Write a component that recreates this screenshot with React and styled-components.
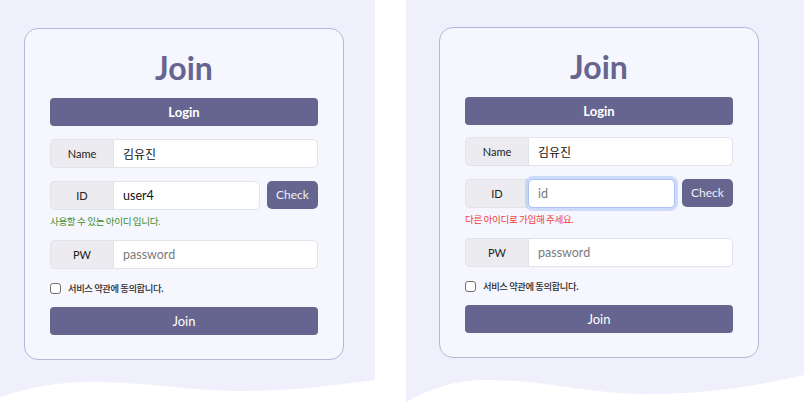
import React from "react";
import styled, { createGlobalStyle, css } from "styled-components";

const Global = createGlobalStyle`
  html, body { margin: 0; padding: 0; background: #ffffff; }
  body { font-family: Lato, "Noto Sans CJK KR", sans-serif; }
  * { box-sizing: border-box; }
`;

const Page = styled.div`
  display: flex;
  width: 804px;
  height: 406px;
  gap: 31px;
  background: #ffffff;
  overflow: hidden;
`;

const Panel = styled.section`
  display: flex;
  flex-direction: column;
  width: ${(p) => p.$width}px;
  height: 406px;
  background: #f0effc;
`;

const Card = styled.div`
  width: 320px;
  margin-top: ${(p) => p.$top}px;
  margin-left: ${(p) => p.$left}px;
  padding: 19px 25px 24px;
  border: 1px solid #b8b6d6;
  border-radius: 14px;
  background: #f6f6fe;
  display: flex;
  flex-direction: column;
`;

const Title = styled.h1`
  margin: 0;
  font-family: Lato, sans-serif;
  font-size: 32px;
  line-height: 40px;
  font-weight: 700;
  color: #65658f;
  text-align: center;
`;

const PrimaryButton = styled.button`
  display: block;
  width: 100%;
  height: 28px;
  margin: ${(p) => p.$margin};
  border: none;
  border-radius: 4px;
  background: #65658f;
  color: #ffffff;
  font-family: Lato, sans-serif;
  font-size: 13px;
  font-weight: ${(p) => (p.$bold ? 700 : 400)};
  padding: 0;
  cursor: pointer;
`;

const Row = styled.div`
  display: flex;
  gap: 7px;
  margin-top: ${(p) => p.$mt}px;
`;

const Group = styled.div`
  flex: 1;
  display: flex;
  height: 29px;
`;

const Label = styled.div`
  width: 63px;
  flex: none;
  display: flex;
  align-items: center;
  justify-content: center;
  background: #ebebf0;
  border: 1px solid #e2e2ea;
  border-right: none;
  border-radius: 5px 0 0 5px;
  font-family: Lato, sans-serif;
  font-size: 11px;
  color: #222;
`;

const Field = styled.div`
  flex: 1;
  display: flex;
  align-items: center;
  padding: 0 9px;
  background: #ffffff;
  border: 1px solid #e2e2ea;
  border-radius: 0 5px 5px 0;
  font-family: Lato, "Noto Sans CJK KR", sans-serif;
  font-size: ${(p) => (p.$kr ? 12 : 12.5)}px;
  color: ${(p) => (p.$placeholder ? "#7a7a80" : "#111")};
  ${(p) =>
    p.$focused &&
    css`
      border: 1px solid #a9c1f4;
      border-radius: 5px;
      box-shadow: 0 0 0 3px rgba(170, 196, 250, 0.55);
    `}
`;

const CheckButton = styled.button`
  width: 51px;
  flex: none;
  height: 28px;
  border: none;
  border-radius: 5px;
  background: #65658f;
  color: #eeeef6;
  font-family: Lato, sans-serif;
  font-size: 12px;
  padding: 0 0 2px;
`;

const Message = styled.p`
  margin: 5px 0 0;
  height: 12px;
  line-height: 12px;
  font-family: "Noto Sans CJK KR", sans-serif;
  font-size: 9.6px;
  letter-spacing: -0.4px;
  color: ${(p) => (p.$error ? "#f0423d" : "#3f8f2d")};
`;

const Agree = styled.label`
  display: flex;
  align-items: center;
  gap: 7px;
  margin-top: 12px;
  font-family: "Noto Sans CJK KR", sans-serif;
  font-size: 9.3px;
  font-weight: 500;
  letter-spacing: -0.4px;
  color: #2a2a2a;
`;

const Box = styled.input`
  appearance: none;
  margin: 0;
  width: 11px;
  height: 11px;
  border: 1px solid #707070;
  border-radius: 3px;
  background: #fff;
`;

const Wave = styled.svg`
  display: block;
  margin-top: auto;
  width: 100%;
  height: 32px;
`;

function JoinCard({ top, left, idValue, focused, message, error, tight }) {
  return (
    <Card $top={top} $left={left}>
      <Title>Join</Title>
      <PrimaryButton $bold $margin="10px 0 0">Login</PrimaryButton>
      <Row $mt={tight ? 12 : 13}>
        <Group>
          <Label>Name</Label>
          <Field $kr>김유진</Field>
        </Group>
      </Row>
      <Row $mt={13}>
        <Group>
          <Label>ID</Label>
          <Field $focused={focused} $placeholder={!idValue}>
            {idValue || "id"}
          </Field>
        </Group>
        <CheckButton>Check</CheckButton>
      </Row>
      <Message $error={error}>{message}</Message>
      <Row $mt={13}>
        <Group>
          <Label>PW</Label>
          <Field $placeholder>password</Field>
        </Group>
      </Row>
      <Agree>
        <Box type="checkbox" />
        서비스 약관에 동의합니다.
      </Agree>
      <PrimaryButton $margin="12px 0 0">Join</PrimaryButton>
    </Card>
  );
}

export default function App() {
  return (
    <>
      <Global />
      <Page>
        <Panel $width={375}>
          <JoinCard
            top={28}
            left={24}
            idValue="user4"
            message="사용할 수 있는 아이디 입니다."
          />
          <Wave viewBox="0 0 375 32" preserveAspectRatio="none">
            <path
              d="M0,23 C30,13 60,8 90,8 C150,8 190,17 240,17 C290,17 330,12 375,6 L375,32 L0,32 Z"
              fill="#ffffff"
            />
          </Wave>
        </Panel>
        <Panel $width={398}>
          <JoinCard
            top={27}
            left={33}
            tight
            focused
            message="다른 아이디로 가입해 주세요."
            error
          />
          <Wave viewBox="0 0 398 32" preserveAspectRatio="none">
            <path
              d="M0,28 C25,14 50,6 80,6 C140,6 180,20 240,20 C300,20 340,14 398,1 L398,32 L0,32 Z"
              fill="#ffffff"
            />
          </Wave>
        </Panel>
      </Page>
    </>
  );
}
